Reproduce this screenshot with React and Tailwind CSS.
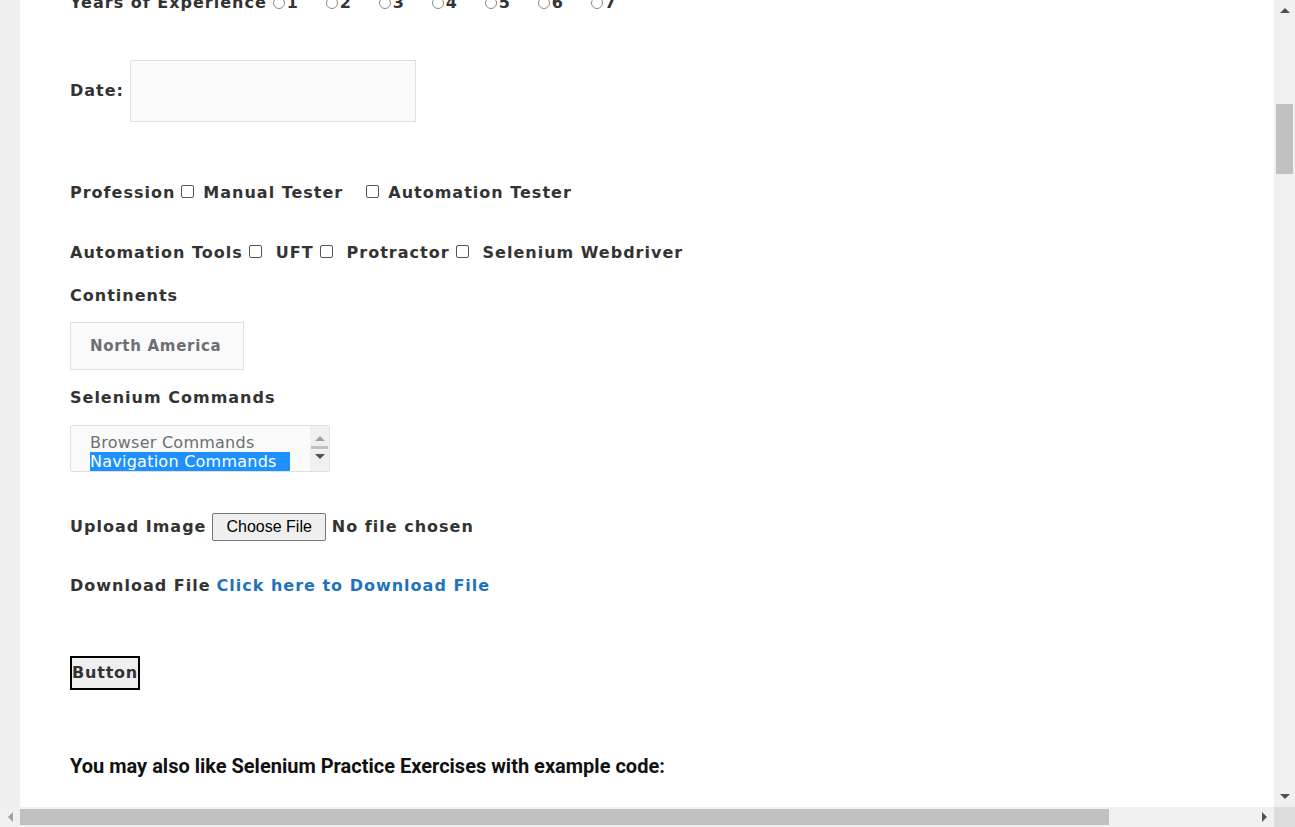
import React from 'react';

const font = "font-['DejaVu_Sans',Verdana,sans-serif]";

const Radio = ({ label }) => (
  <span className="w-[53px] flex items-center">
    <span className="w-[12px] h-[12px] rounded-full border border-[#8a8a8a] bg-white mr-[2px]" />
    <span>{label}</span>
  </span>
);

const Check = ({ className = '' }) => (
  <span className={`inline-block w-[13px] h-[13px] rounded-[2px] border border-[#555] bg-white -translate-y-[2px] ${className}`} />
);

const VScroll = () => (
  <div className="w-[21px] bg-[#f0f0f0] flex flex-col items-center">
    <div className="h-[21px] flex items-center justify-center">
      <div className="w-0 h-0 border-l-[5px] border-r-[5px] border-b-[5px] border-l-transparent border-r-transparent border-b-[#505050]" />
    </div>
    <div className="flex-1 w-full px-[2px] pt-[83px]">
      <div className="h-[70px] bg-[#c1c1c1]" />
    </div>
    <div className="h-[21px] flex items-center justify-center">
      <div className="w-0 h-0 border-l-[5px] border-r-[5px] border-t-[5px] border-l-transparent border-r-transparent border-t-[#505050]" />
    </div>
  </div>
);

const HScroll = () => (
  <div className="h-[20px] flex bg-[#f0f0f0]">
    <div className="w-[20px] flex items-center justify-center">
      <div className="w-0 h-0 border-t-[5px] border-b-[5px] border-r-[5px] border-t-transparent border-b-transparent border-r-[#a0a0a0]" />
    </div>
    <div className="flex-1 py-[2px] pr-[145px]">
      <div className="h-full bg-[#c1c1c1]" />
    </div>
    <div className="w-[20px] flex items-center justify-center">
      <div className="w-0 h-0 border-t-[5px] border-b-[5px] border-l-[5px] border-t-transparent border-b-transparent border-l-[#505050]" />
    </div>
    <div className="w-[21px] bg-[#dcdcdc]" />
  </div>
);

export default function App() {
  return (
    <div className="w-[1295px] h-[827px] overflow-hidden flex flex-col bg-white">
      <div className="flex flex-1 min-h-0">
        <div className="w-[20px] bg-[#efefef]" />
        <main className={`flex-1 overflow-hidden pl-[50px] text-[16px] tracking-[1px] font-bold text-[#333] ${font}`}>
          <div className="h-[20px] -mt-[7px] flex items-center">
            <span className="mr-[6px]">Years of Experience</span>
            {['1', '2', '3', '4', '5', '6', '7'].map((n) => (
              <Radio key={n} label={n} />
            ))}
          </div>

          <div className="mt-[47px] h-[62px] flex items-center">
            <span className="mr-[6px]">Date:</span>
            <div className="w-[286px] h-[62px] bg-[#fafafa] border border-[#e0e0e0]" />
          </div>

          <div className="mt-[61px] h-[20px] flex items-center">
            <span>Profession</span>
            <Check className="ml-[6px] mr-[9px]" />
            <span>Manual Tester</span>
            <Check className="ml-[23px] mr-[9px]" />
            <span>Automation Tester</span>
          </div>

          <div className="mt-[40px] h-[20px] flex items-center">
            <span>Automation Tools</span>
            <Check className="ml-[6px] mr-[14px]" />
            <span>UFT</span>
            <Check className="ml-[6px] mr-[14px]" />
            <span>Protractor</span>
            <Check className="ml-[6px] mr-[14px]" />
            <span>Selenium Webdriver</span>
          </div>

          <div className="mt-[23px] h-[20px] flex items-center">Continents</div>

          <div className="mt-[16px] w-[174px] h-[48px] border border-[#e0e0e0] bg-[#fafafa] flex items-center pl-[19px] text-[15px] tracking-[0.7px] text-[#6b6f74]">
            North America
          </div>

          <div className="mt-[18px] h-[20px] flex items-center">Selenium Commands</div>

          <div className="mt-[17px] w-[260px] h-[47px] border border-[#e0e0e0] bg-[#fafafa] rounded-[2px] flex overflow-hidden">
            <div className="flex-1 pl-[19px] pr-[20px] pt-[7px] font-normal text-[16px] tracking-[0.25px] leading-[19px] whitespace-nowrap">
              <div className="text-[#6b6f74]">Browser Commands</div>
              <div className="bg-[#1e90ff] text-white">Navigation Commands</div>
            </div>
            <div className="w-[19px] bg-[#f0f0f0] flex flex-col items-center pt-[10px]">
              <div className="w-0 h-0 border-l-[5px] border-r-[5px] border-b-[5px] border-l-transparent border-r-transparent border-b-[#a3a3a3]" />
              <div className="mt-[5px] w-[17px] h-[3px] bg-[#c1c1c1]" />
              <div className="mt-[5px] w-0 h-0 border-l-[5px] border-r-[5px] border-t-[5px] border-l-transparent border-r-transparent border-t-[#505050]" />
            </div>
          </div>

          <div className="mt-[41px] h-[28px] flex items-center">
            <span className="mr-[6px]">Upload Image</span>
            <span className="h-[28px] px-[13px] flex items-center bg-[#efefef] border border-[#767676] rounded-[2px] font-normal text-[16px] tracking-normal text-black font-['Liberation_Sans',Arial,sans-serif]">
              Choose File
            </span>
            <span className="ml-[6px]">No file chosen</span>
          </div>

          <div className="mt-[35px] h-[20px] flex items-center">
            <span className="mr-[6px]">Download File</span>
            <a className="text-[#1e73be]" href="#">Click here to Download File</a>
          </div>

          <div className="mt-[60px]">
            <button className="h-[34px] px-0 border-2 border-black bg-[#efefef] text-[16px] tracking-[0.8px] font-bold text-[#333]">
              Button
            </button>
          </div>

          <div className="mt-[64px] h-[24px] flex items-center text-[20px] tracking-normal text-[#111] font-['Roboto',sans-serif]">
            You may also like Selenium Practice Exercises with example code:
          </div>
        </main>
        <VScroll />
      </div>
      <HScroll />
    </div>
  );
}
